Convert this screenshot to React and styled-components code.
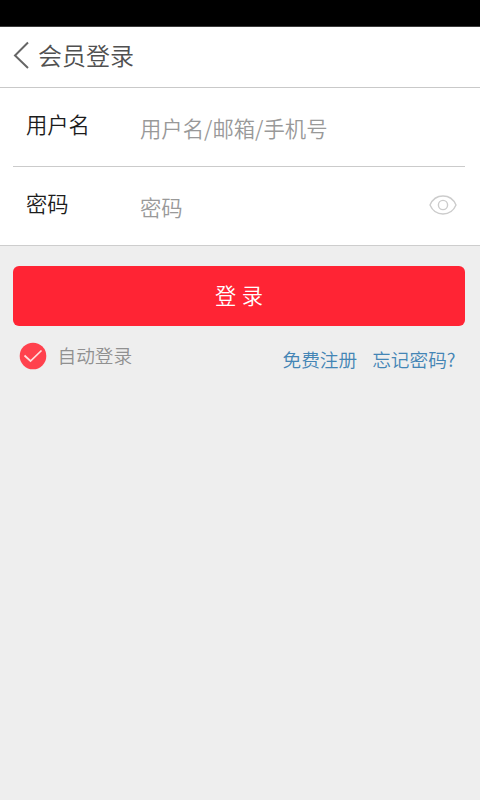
import React from "react";
import styled, { createGlobalStyle } from "styled-components";

const GlobalStyle = createGlobalStyle`
  *, *::before, *::after { box-sizing: border-box; }
  body {
    margin: 0;
    background: #eee;
    font-family: "Noto Sans CJK SC", sans-serif;
    font-weight: 350;
  }
  button, input { font-family: inherit; font-weight: inherit; }
`;

const Screen = styled.div`
  width: 480px;
  height: 800px;
  overflow: hidden;
  background: #eee;
`;

const StatusBar = styled.div`
  height: 27px;
  background: #000;
  border-bottom: 1px solid #3c3c3c;
`;

const Header = styled.header`
  display: flex;
  align-items: center;
  gap: 8px;
  height: 61px;
  padding: 0 0 4px 13px;
  background: #fff;
  border-bottom: 1px solid #c9c9c9;
`;

const BackIcon = styled.svg`
  display: block;
  flex: none;
  width: 17px;
  height: 28px;
`;

const Title = styled.h1`
  margin: 0;
  font-size: 24px;
  line-height: 36px;
  font-weight: 350;
  color: #505050;
`;

const Form = styled.form`
  margin: 0;
`;

const Fields = styled.div`
  padding: 0 15px 0 13px;
  height: 158px;
  background: #fff;
  border-bottom: 1px solid #cdcdcd;
`;

const Field = styled.div`
  display: flex;
  align-items: flex-start;
  height: 79px;
  padding-left: 13px;
  border-bottom: ${(p) => (p.$divided ? "1px solid #cbcbcb" : "none")};
`;

const Label = styled.label`
  flex: none;
  width: 114px;
  padding-top: 20px;
  font-size: 21.3px;
  line-height: 32px;
  color: #1c1c1c;
`;

const Input = styled.input`
  flex: 1;
  min-width: 0;
  height: 32px;
  margin: 23px 0 0;
  padding: 0;
  border: 0;
  outline: 0;
  background: transparent;
  font-size: 21.35px;
  color: #222;
  &::placeholder { color: #999; opacity: 1; }
`;

const EyeButton = styled.button`
  flex: none;
  margin: 28px 8.5px 0 0;
  padding: 0;
  border: 0;
  background: none;
  svg { display: block; }
`;

const Submit = styled.button`
  display: block;
  width: 452px;
  height: 60px;
  margin: 20px 0 0 13px;
  padding: 0 0 3px;
  border: 0;
  border-radius: 6px;
  background: #ff2434;
  color: #fff;
  font-size: 21.2px;
  word-spacing: 1px;
`;

const Options = styled.div`
  display: flex;
  justify-content: space-between;
  align-items: flex-start;
  padding: 16px 24.5px 0 19px;
`;

const AutoLogin = styled.div`
  display: flex;
  align-items: center;
  gap: 10.5px;
  height: 28px;
  font-size: 18.67px;
  color: #909090;
  svg { display: block; }
`;

const AutoText = styled.span`
  line-height: 28px;
  padding-bottom: 2px;
`;

const Links = styled.nav`
  display: flex;
  gap: 15px;
  padding-top: 3px;
`;

const Link = styled.a`
  font-size: 18.67px;
  line-height: 28px;
  color: #4485b5;
  text-decoration: none;
`;

export default function App() {
  return (
    <>
      <GlobalStyle />
      <Screen>
        <StatusBar />
        <Header>
          <BackIcon viewBox="0 0 17 28" fill="none" stroke="#666" strokeWidth="2">
            <path d="M15 1.5 2 14.5 15 27" />
          </BackIcon>
          <Title>会员登录</Title>
        </Header>
        <Form>
          <Fields>
            <Field $divided>
              <Label htmlFor="user">用户名</Label>
              <Input id="user" placeholder="用户名/邮箱/手机号" />
            </Field>
            <Field>
              <Label htmlFor="pass">密码</Label>
              <Input id="pass" type="password" placeholder="密码" />
              <EyeButton type="button" aria-label="显示密码">
                <svg width="28" height="20" viewBox="0 0 28 20" fill="none" stroke="#cccccc" strokeWidth="1.4">
                  <path d="M1 10C3.5 4.2 8 1 14 1s10.5 3.2 13 9c-2.5 5.8-7 9-13 9S3.5 15.8 1 10Z" />
                  <circle cx="14" cy="10" r="4.6" />
                </svg>
              </EyeButton>
            </Field>
          </Fields>
          <Submit type="button">登 录</Submit>
          <Options>
            <AutoLogin>
              <svg width="28" height="28" viewBox="0 0 28 28" fill="none">
                <circle cx="14" cy="14" r="13.3" fill="#ff414d" />
                <path d="m5.5 13.5 6 5.5L22.5 8.5" stroke="#ffdede" strokeWidth="1.7" />
              </svg>
              <AutoText>自动登录</AutoText>
            </AutoLogin>
            <Links>
              <Link>免费注册</Link>
              <Link>忘记密码?</Link>
            </Links>
          </Options>
        </Form>
      </Screen>
    </>
  );
}
